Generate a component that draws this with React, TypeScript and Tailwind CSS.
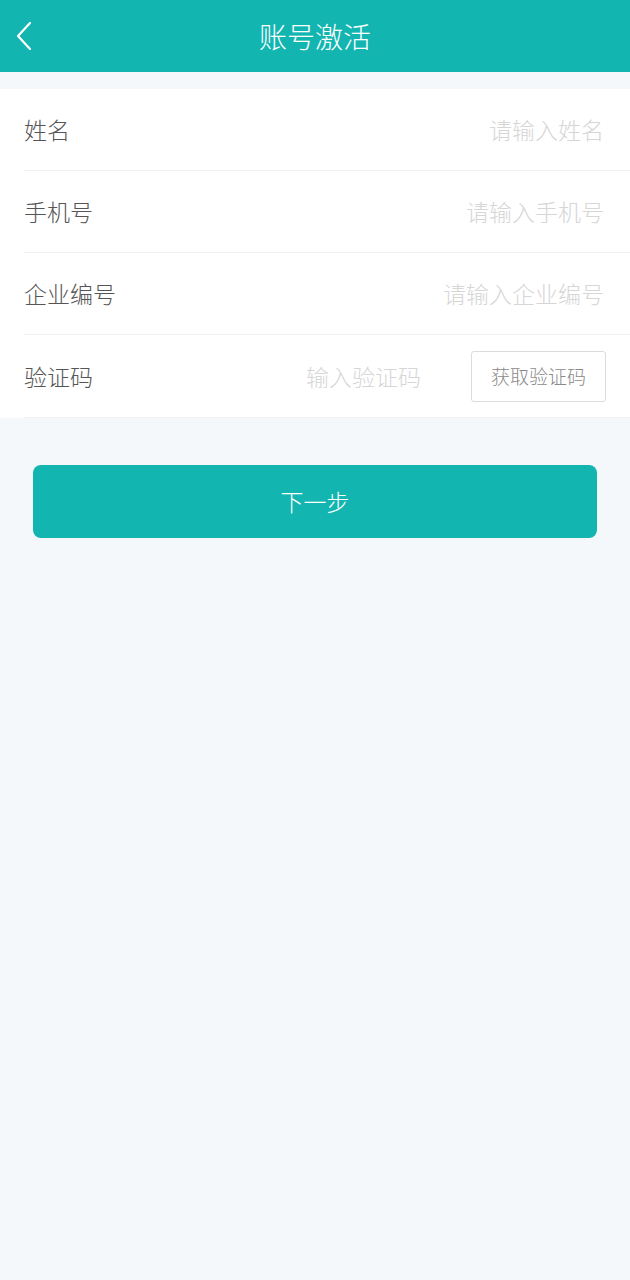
import React from 'react';

const font = { fontFamily: '"Noto Sans CJK SC", "Noto Sans", sans-serif' };

interface FieldRowProps {
  label: string;
  placeholder: string;
}

const FieldRow: React.FC<FieldRowProps> = ({ label, placeholder }) => (
  <div className="ml-6 flex h-[82px] items-center border-b border-[#f0f2f3] pr-[26px]">
    <span className="text-[23px] font-light text-[#555]">{label}</span>
    <span className="ml-auto text-[23px] font-light text-[#d6d6d6]">{placeholder}</span>
  </div>
);

const App: React.FC = () => {
  return (
    <div className="min-h-[1280px] w-full bg-[#f4f8fb]" style={font}>
      {/* Header */}
      <div className="relative flex h-[72px] items-center justify-center bg-[#13b5b1]">
        <svg
          className="absolute left-[14px] top-[21px]"
          width="20"
          height="30"
          viewBox="0 0 20 30"
          fill="none"
        >
          <path d="M16 2 L4 15 L16 28" stroke="white" strokeWidth="2.2" strokeLinecap="round" strokeLinejoin="round" />
        </svg>
        <h1 className="text-[28px] font-light text-white">账号激活</h1>
      </div>

      {/* Form */}
      <div className="mt-[17px] bg-white">
        <FieldRow label="姓名" placeholder="请输入姓名" />
        <FieldRow label="手机号" placeholder="请输入手机号" />
        <FieldRow label="企业编号" placeholder="请输入企业编号" />
        <div className="ml-6 flex h-[83px] items-center border-b border-[#f0f2f3] pr-6">
          <span className="text-[23px] font-light text-[#555]">验证码</span>
          <span className="ml-auto mr-[50px] text-[23px] font-light text-[#d6d6d6]">输入验证码</span>
          <button className="flex h-[51px] w-[135px] items-center justify-center rounded-[3px] border border-[#dcdcdc] bg-white text-[19px] font-light text-[#8a8a8a]">
            获取验证码
          </button>
        </div>
      </div>

      {/* Next button */}
      <div className="px-[33px] pt-[47px]">
        <button className="flex h-[73px] w-full items-center justify-center rounded-lg bg-[#13b5b1] text-[23px] font-light text-white">
          下一步
        </button>
      </div>
    </div>
  );
};

export default App;
